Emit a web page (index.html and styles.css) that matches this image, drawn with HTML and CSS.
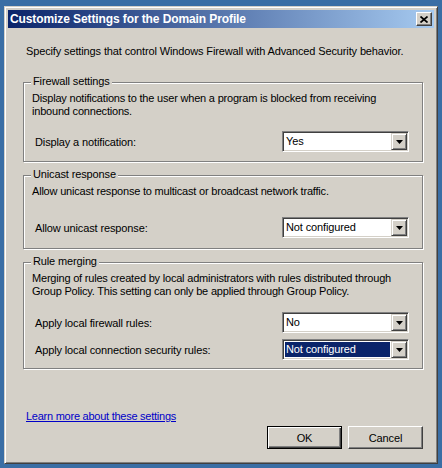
FILE: index.html
```html
<!DOCTYPE html>
<html>
<head>
<meta charset="utf-8">
<link rel="stylesheet" href="styles.css">
</head>
<body>
<div class="window">
  <div class="titlebar">
    <span class="title">Customize Settings for the Domain Profile</span>
    <span class="close"><svg width="8" height="7" viewBox="0 0 8 7"><path d="M0.5 0.5 L7.5 6.5 M7.5 0.5 L0.5 6.5" stroke="#000" stroke-width="1.7" fill="none"/></svg></span>
  </div>
  <div class="client">
    <p class="intro">Specify settings that control Windows Firewall with Advanced Security behavior.</p>

    <section class="group g1">
      <span class="legend">Firewall settings</span>
      <p class="desc">Display notifications to the user when a program is blocked from receiving<br>inbound connections.</p>
      <div class="row">
        <span class="label">Display a notification:</span>
        <div class="combo"><span class="value">Yes</span><span class="drop"><svg width="7" height="4" viewBox="0 0 7 4"><path d="M0 0H7L3.5 4Z" fill="#000"/></svg></span></div>
      </div>
    </section>

    <section class="group g2">
      <span class="legend">Unicast response</span>
      <p class="desc">Allow unicast response to multicast or broadcast network traffic.</p>
      <div class="row">
        <span class="label">Allow unicast response:</span>
        <div class="combo"><span class="value">Not configured</span><span class="drop"><svg width="7" height="4" viewBox="0 0 7 4"><path d="M0 0H7L3.5 4Z" fill="#000"/></svg></span></div>
      </div>
    </section>

    <section class="group g3">
      <span class="legend">Rule merging</span>
      <p class="desc">Merging of rules created by local administrators with rules distributed through<br>Group Policy. This setting can only be applied through Group Policy.</p>
      <div class="row">
        <span class="label">Apply local firewall rules:</span>
        <div class="combo"><span class="value">No</span><span class="drop"><svg width="7" height="4" viewBox="0 0 7 4"><path d="M0 0H7L3.5 4Z" fill="#000"/></svg></span></div>
      </div>
      <div class="row row2">
        <span class="label">Apply local connection security rules:</span>
        <div class="combo"><span class="value selected">Not configured</span><span class="drop"><svg width="7" height="4" viewBox="0 0 7 4"><path d="M0 0H7L3.5 4Z" fill="#000"/></svg></span></div>
      </div>
    </section>

    <div class="footer">
      <a class="link" href="#">Learn more about these settings</a>
      <div class="buttons">
        <button class="btn default">OK</button>
        <button class="btn">Cancel</button>
      </div>
    </div>
  </div>
</div>
</body>
</html>
```

FILE: styles.css
```css
html, body {
  margin: 0;
  height: 100%;
}
body {
  background: #3a6ea5;
  font-family: "Liberation Sans", Arial, sans-serif;
  font-size: 11px;
  letter-spacing: -0.13px;
  color: #000;
  padding: 6px 0 0 4px;
  box-sizing: border-box;
}
.window {
  width: 434px;
  height: 458px;
  box-sizing: border-box;
  background: #d4d0c8;
  border: 1px solid;
  border-color: #d4d0c8 #404040 #404040 #d4d0c8;
  box-shadow: inset 1px 1px 0 #fff, inset -1px -1px 0 #808080;
  padding: 3px;
  display: flex;
  flex-direction: column;
}
.titlebar {
  height: 18px;
  flex: none;
  background: linear-gradient(to right, #0a246a, #a6caf0);
  display: flex;
  align-items: center;
  justify-content: space-between;
  padding: 0 2px;
}
.title {
  color: #fff;
  font-weight: bold;
  font-size: 12px;
  letter-spacing: -0.1px;
  white-space: nowrap;
}
.close {
  width: 16px;
  height: 14px;
  box-sizing: border-box;
  background: #d4d0c8;
  border: 1px solid;
  border-color: #fff #404040 #404040 #fff;
  box-shadow: inset -1px -1px 0 #808080;
  display: flex;
  align-items: center;
  justify-content: center;
}
.close svg { display: block; }
.client {
  flex: 1;
  display: flex;
  flex-direction: column;
  padding: 17px 11px 11px 15px;
}
.intro {
  margin: 0;
  line-height: 13px;
  padding-left: 3px;
  white-space: nowrap;
}
.group {
  position: relative;
  width: 400px;
  box-sizing: border-box;
  border: 1px solid #808080;
  box-shadow: 1px 1px 0 #fff, inset 1px 1px 0 #fff;
  padding: 9px 13px 9px 0;
}
.g1 { margin-top: 24px; }
.g2 { margin-top: 13px; padding-bottom: 10px; }
.g3 { margin-top: 13px; padding-bottom: 8px; }
.legend {
  position: absolute;
  top: -8px;
  left: 7px;
  padding: 0 2px;
  line-height: 13px;
  background: #d4d0c8;
  white-space: nowrap;
}
.desc {
  margin: 0;
  padding-left: 8px;
  line-height: 13px;
  letter-spacing: -0.2px;
  white-space: nowrap;
}
.row {
  display: flex;
  align-items: center;
  justify-content: space-between;
  padding-left: 11px;
  margin-top: 13px;
}
.g2 .row { margin-top: 19px; }
.g3 .row { margin-top: 14px; }
.g3 .row2 { margin-top: 6px; }
.combo {
  width: 127px;
  height: 21px;
  box-sizing: border-box;
  background: #fff;
  border: 1px solid;
  border-color: #808080 #fff #fff #808080;
  box-shadow: inset 1px 1px 0 #404040, inset -1px -1px 0 #d4d0c8;
  padding: 1px;
  display: flex;
}
.value {
  flex: 1;
  margin: 1px;
  padding-left: 1px;
  line-height: 15px;
  white-space: nowrap;
}
.value.selected {
  background: #0a246a;
  color: #fff;
}
.drop {
  width: 16px;
  height: 17px;
  box-sizing: border-box;
  background: #d4d0c8;
  border: 1px solid;
  border-color: #d4d0c8 #404040 #404040 #d4d0c8;
  box-shadow: inset 1px 1px 0 #fff, inset -1px -1px 0 #808080;
  display: flex;
  align-items: center;
  justify-content: center;
}
.drop svg { display: block; }
.footer {
  margin-top: auto;
  display: flex;
  flex-direction: column;
}
.link {
  align-self: flex-start;
  margin-left: 3px;
  line-height: 13px;
  letter-spacing: -0.25px;
  color: #0000c8;
  text-decoration: underline;
}
.buttons {
  display: flex;
  justify-content: flex-end;
  gap: 6px;
  margin-top: 3px;
}
.btn {
  width: 75px;
  height: 23px;
  box-sizing: border-box;
  margin: 0;
  padding: 0;
  font-family: "Liberation Sans", Arial, sans-serif;
  font-size: 11px;
  letter-spacing: -0.13px;
  color: #000;
  background: #d4d0c8;
  border: 1px solid;
  border-color: #fff #404040 #404040 #fff;
  box-shadow: inset -1px -1px 0 #808080;
}
.btn.default {
  border: 1px solid #000;
  box-shadow: inset 1px 1px 0 #fff, inset -1px -1px 0 #404040, inset -2px -2px 0 #808080;
}
```
